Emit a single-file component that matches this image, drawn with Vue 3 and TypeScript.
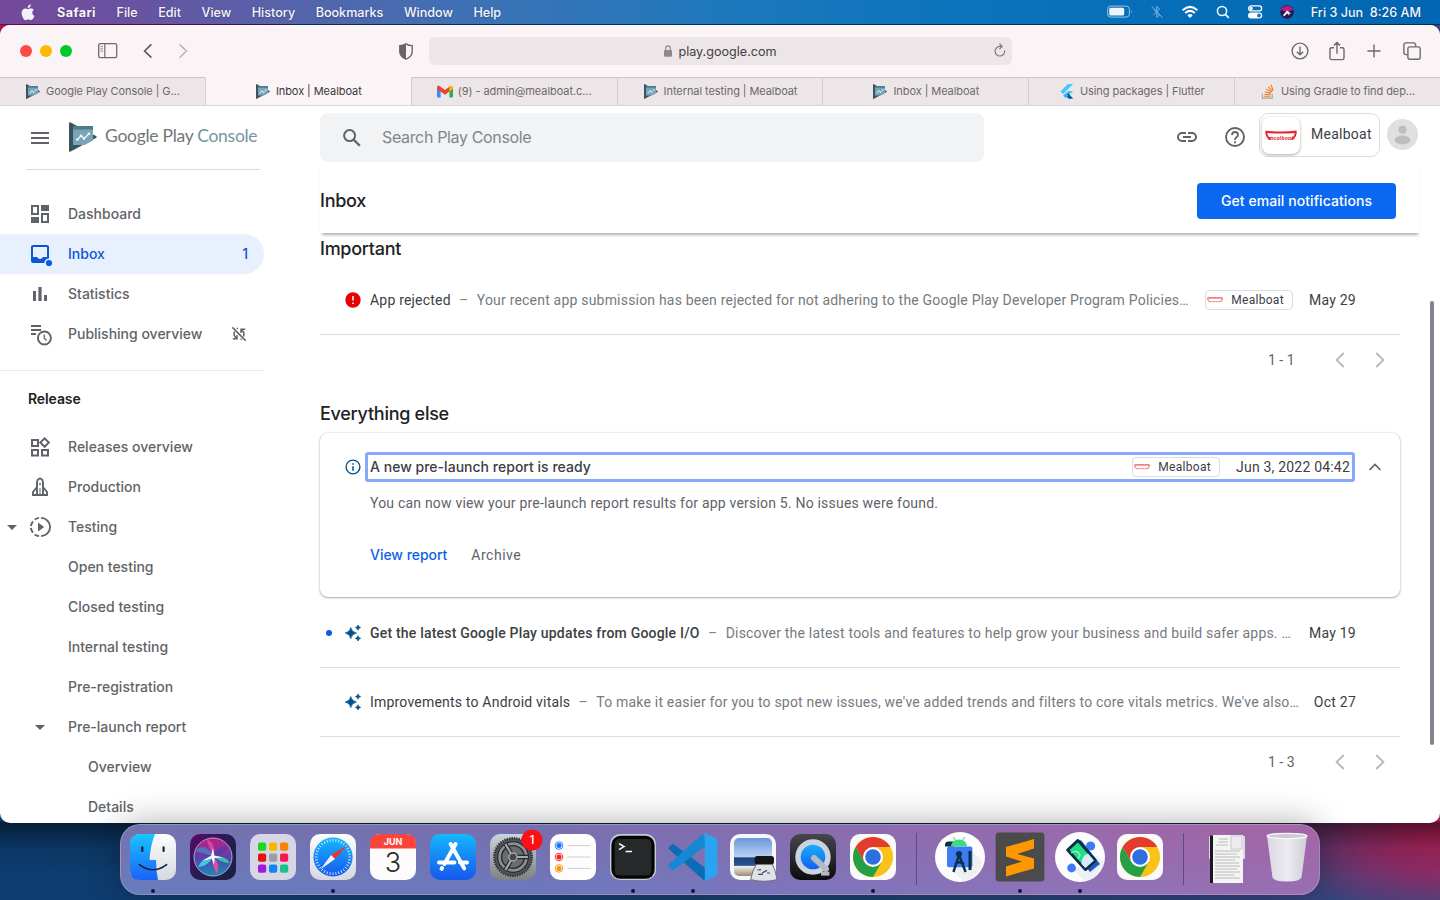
<script setup lang="ts">
interface Tab { title: string; icon: string; active?: boolean }
interface NavItem { label: string; icon?: string; level?: number; arrow?: 'outer' | 'inner'; active?: boolean; count?: number; muted?: boolean }
interface Message { title: string; body: string; date: string; icon: string; unread?: boolean; app?: string }

const menus: string[] = ['File', 'Edit', 'View', 'History', 'Bookmarks', 'Window', 'Help']

const tabs: Tab[] = [
  { title: 'Google Play Console | G...', icon: 'i-play' },
  { title: 'Inbox | Mealboat', icon: 'i-play', active: true },
  { title: '(9) - admin@mealboat.c...', icon: 'i-gmail' },
  { title: 'Internal testing | Mealboat', icon: 'i-play' },
  { title: 'Inbox | Mealboat', icon: 'i-play' },
  { title: 'Using packages | Flutter', icon: 'i-flutter' },
  { title: 'Using Gradle to find dep...', icon: 'i-stack' },
]

const topNav: NavItem[] = [
  { label: 'Dashboard', icon: 'i-dashboard' },
  { label: 'Inbox', icon: 'i-inbox', active: true, count: 1 },
  { label: 'Statistics', icon: 'i-stats' },
  { label: 'Publishing overview', icon: 'i-publishing', muted: true },
]

const releaseNav: NavItem[] = [
  { label: 'Releases overview', icon: 'i-releases' },
  { label: 'Production', icon: 'i-rocket' },
  { label: 'Testing', icon: 'i-testing', arrow: 'outer' },
  { label: 'Open testing' },
  { label: 'Closed testing' },
  { label: 'Internal testing' },
  { label: 'Pre-registration' },
  { label: 'Pre-launch report', arrow: 'inner' },
  { label: 'Overview', level: 2 },
  { label: 'Details', level: 2 },
]

const important: Message[] = [
  {
    title: 'App rejected',
    body: 'Your recent app submission has been rejected for not adhering to the Google Play Developer Program Policies…',
    date: 'May 29',
    icon: 'i-error',
    app: 'Mealboat',
  },
]

const others: Message[] = [
  {
    title: 'Get the latest Google Play updates from Google I/O',
    body: 'Discover the latest tools and features to help grow your business and build safer apps. …',
    date: 'May 19',
    icon: 'i-sparkle',
    unread: true,
  },
  {
    title: 'Improvements to Android vitals',
    body: "To make it easier for you to spot new issues, we've added trends and filters to core vitals metrics. We've also…",
    date: 'Oct 27',
    icon: 'i-sparkle',
  },
]

const ticks: number[] = Array.from({ length: 36 }, (_, i) => i * 10)
const launchpad: string[] = ['#1bd61b', '#f9b500', '#fb8200', '#e8120c', '#9b9fa3', '#fb1550', '#a01bd8', '#1583f5', '#14c48b']
</script>

<template>
  <div class="desktop">
    <svg class="sprite" width="0" height="0" aria-hidden="true">
      <defs>
        <symbol id="i-play" viewBox="0 0 28 30">
          <path d="M0 1.2Q0-.3 1.6.4L27 14Q28.3 15 27 16L1.6 29.6Q0 30.3 0 28.8Z" fill="#3a5361" />
          <path d="M4 4H24V18.4L15.6 23H4Z" fill="#78a4b8" />
          <path d="M4 4H24V7.6H4Z" fill="#507b8b" />
          <path d="M8.3 17.6L12 13.6L15 16.6L20 11.6" fill="none" stroke="#fff" stroke-width="1.3" />
          <circle cx="8.3" cy="17.6" r="1.2" fill="#fff" /><circle cx="12" cy="13.6" r="1.2" fill="#fff" />
          <circle cx="15" cy="16.6" r="1.2" fill="#fff" /><circle cx="20" cy="11.6" r="1.2" fill="#fff" />
        </symbol>
        <symbol id="i-gmail" viewBox="0 0 16 12">
          <path d="M0 2V11Q0 12 1 12H3.6V4.6Z" fill="#4285f4" />
          <path d="M16 2V11Q16 12 15 12H12.4V4.6Z" fill="#34a853" />
          <path d="M0 2Q.4-.6 2.6.4L8 4.6L13.4.4L12.4 6L8 9.2L3.6 6L0 3.2Z" fill="#ea4335" />
          <path d="M12.4 1.2L13.4.4Q15.8-.6 16 2V3.2L12.4 6Z" fill="#fbbc04" />
        </symbol>
        <symbol id="i-flutter" viewBox="0 0 14 16">
          <path d="M8 0H13.6L2.8 10.6L0 8Z" fill="#40c9fa" />
          <path d="M8 7.4H13.6L8.6 12.2L5.6 9.6Z" fill="#40c9fa" />
          <path d="M5.6 12.4L8.3 9.7L13.6 15.8H8.6Z" fill="#0b5aa5" />
          <path d="M2.9 12.4L5.6 9.6L8.4 12.4L5.6 15Z" fill="#35b6f0" />
        </symbol>
        <symbol id="i-stack" viewBox="0 0 14 16">
          <path d="M1 10.5V15H11.5V10.5" fill="none" stroke="#a5a3a4" stroke-width="1.2" />
          <path d="M3 13H9.6M3.1 10.9L9.8 11.5M3.6 8.2L10.2 10M5 5.2L10.9 8.7M7.2 2.8L11.7 7.8M10.2.8L12.6 7.2" fill="none" stroke="#f2801e" stroke-width="1.2" />
        </symbol>
        <symbol id="i-dashboard" viewBox="0 0 24 24">
          <path d="M4 4H10V12H4ZM14 12H20V20H14Z" fill="none" stroke="currentColor" stroke-width="2" />
          <path d="M13 3H21V9H13ZM3 15H11V21H3Z" fill="currentColor" />
        </symbol>
        <symbol id="i-inbox" viewBox="0 0 24 24" overflow="visible">
          <path d="M5 3H19Q21 3 21 5V19Q21 21 19 21H5Q3 21 3 19V5Q3 3 5 3ZM5 5V15H9Q10 17 12 17Q14 17 15 15H19V5Z" fill="currentColor" fill-rule="evenodd" />
          <circle cx="21" cy="21" r="4.6" fill="#e8f0fe" />
          <circle cx="21" cy="21" r="3.1" fill="#0b57f0" />
        </symbol>
        <symbol id="i-stats" viewBox="0 0 24 24">
          <path d="M5 9H8V19H5ZM10.4 5H13.6V19H10.4ZM16 13H19V19H16Z" fill="currentColor" />
        </symbol>
        <symbol id="i-publishing" viewBox="0 0 24 24">
          <path d="M3 4H13M3 8H13M3 12H8" stroke="currentColor" stroke-width="1.9" />
          <circle cx="16.4" cy="16" r="6.5" fill="none" stroke="currentColor" stroke-width="1.9" />
          <path d="M16.2 12.5V16.2L18.6 18.4" fill="none" stroke="currentColor" stroke-width="1.3" />
        </symbol>
        <symbol id="i-releases" viewBox="0 0 24 24">
          <path d="M4 5H10V11H4ZM4 15H10V20.4H4ZM14 15H20V20.4H14ZM16.6 3.4L20.8 7.6L16.6 11.8L12.4 7.6Z" fill="none" stroke="currentColor" stroke-width="2" />
        </symbol>
        <symbol id="i-rocket" viewBox="0 0 24 24">
          <path d="M9 20V8Q9 4 12 3.4Q15 4 15 8V20M9 12L5 17V20H19V17L15 12M5 20H19" fill="none" stroke="currentColor" stroke-width="1.9" />
          <circle cx="12" cy="9" r="1" fill="currentColor" />
          <path d="M12 13V20" stroke="currentColor" stroke-width="1" />
        </symbol>
        <symbol id="i-testing" viewBox="0 0 24 24">
          <path d="M13 2.9A9.1 9.1 0 0 1 13 21.1M11 2.9Q8.6 3.2 6.7 4.6M5 6.3Q3.3 8.3 2.9 11M2.9 13Q3.3 15.7 5 17.7M6.7 19.4Q8.6 20.8 11 21.1" fill="none" stroke="currentColor" stroke-width="1.9" />
          <path d="M10 7.4V16.6L16.2 12Z" fill="currentColor" />
        </symbol>
        <symbol id="i-error" viewBox="0 0 16 16">
          <circle cx="8" cy="8" r="7.7" fill="#e60000" />
          <path d="M8 4V8.6M8 10.4V12" stroke="#fff" stroke-width="1.5" />
        </symbol>
        <symbol id="i-info" viewBox="0 0 16 16">
          <circle cx="8" cy="8" r="6.9" fill="none" stroke="#01508a" stroke-width="1.4" />
          <path d="M8 7.2V11.8M8 4.2V5.8" stroke="#01508a" stroke-width="1.5" />
        </symbol>
        <symbol id="i-sparkle" viewBox="0 0 16 16">
          <path d="M5.8 2.6Q6.7 7.2 11.4 8Q6.7 8.9 5.8 13.6Q4.9 8.9.2 8Q4.9 7.2 5.8 2.6ZM13 0Q13.4 2.2 15.6 2.6Q13.4 3 13 5.2Q12.6 3 10.4 2.6Q12.6 2.2 13 0ZM13 10.8Q13.4 13 15.6 13.4Q13.4 13.8 13 16Q12.6 13.8 10.4 13.4Q12.6 13 13 10.8Z" fill="#01508a" stroke="#01508a" stroke-width=".7" />
        </symbol>
        <symbol id="i-boat" viewBox="0 0 32 11">
          <path d="M1 1.6Q1.8 8 5.6 9.4M31 1.6Q30.2 8 26.4 9.4" fill="none" stroke="#e8252a" stroke-width="1.9" />
          <path d="M.3.5Q16 2.6 31.7.5L30.9 2.9Q16 4 1.2 2.9Z" fill="#e8252a" />
        </symbol>
        <symbol id="i-boat-small" viewBox="0 0 16 6">
          <path d="M.5.9H15.5" stroke="#ea4a4f" stroke-width="1.2" />
          <path d="M.6 1.2Q.8 4.4 3 4.8M15.4 1.2Q15.2 4.4 13 4.8" fill="none" stroke="#ea4a4f" stroke-width=".9" />
          <path d="M3.4 4.7H12.8" stroke="#ee7377" stroke-width="1" stroke-dasharray="2 .5" />
        </symbol>
        <symbol id="i-chrome" viewBox="0 0 60 60">
          <rect x="7" y="7" width="46" height="46" rx="10" fill="#fafafa" />
          <circle cx="30" cy="30" r="20" fill="#fbc116" />
          <path d="M12.7 20A20 20 0 0 1 47.3 20H30L21.3 35Z" fill="#e33b2e" />
          <path d="M12.7 20A20 20 0 0 0 30 50L38.7 35L30 30L21.3 35Z" fill="#26a045" />
          <circle cx="30" cy="30" r="10" fill="#fff" />
          <circle cx="30" cy="30" r="7.8" fill="#2d6fe0" />
        </symbol>
        <linearGradient id="g-finder" x2="0" y2="1"><stop stop-color="#19c5fd" /><stop offset="1" stop-color="#1b62f8" /></linearGradient>
        <linearGradient id="g-white" x2="0" y2="1"><stop stop-color="#fdfdfe" /><stop offset="1" stop-color="#d5d9df" /></linearGradient>
        <linearGradient id="g-blue" x2="0" y2="1"><stop stop-color="#14b8fc" /><stop offset="1" stop-color="#1657ee" /></linearGradient>
        <linearGradient id="g-siri" x2="1" y2="1"><stop stop-color="#5a0a68" /><stop offset=".5" stop-color="#2a1a52" /><stop offset="1" stop-color="#14223f" /></linearGradient>
        <linearGradient id="g-orb" x2="0" y2="1"><stop stop-color="#c81c7d" /><stop offset=".5" stop-color="#5e3fae" /><stop offset="1" stop-color="#158db5" /></linearGradient>
        <linearGradient id="g-gear" x2="0" y2="1"><stop stop-color="#c8d5de" /><stop offset="1" stop-color="#7f8081" /></linearGradient>
        <linearGradient id="g-quick" x2="0" y2="1"><stop stop-color="#45474d" /><stop offset="1" stop-color="#0c0c0e" /></linearGradient>
        <linearGradient id="g-sea" x2="0" y2="1"><stop stop-color="#6a96de" /><stop offset=".5" stop-color="#b9d2f1" /><stop offset=".52" stop-color="#1f3f7c" /><stop offset=".72" stop-color="#2c568f" /><stop offset=".75" stop-color="#eeeeea" /><stop offset="1" stop-color="#9e8a78" /></linearGradient>
        <linearGradient id="g-bin"><stop stop-color="#dcdde2" /><stop offset=".5" stop-color="#f1f1f4" /><stop offset="1" stop-color="#d2d2d8" /></linearGradient>
      </defs>
    </svg>

    <header class="menubar">
      <svg class="apple" viewBox="0 0 14 17" width="14" height="17"><path d="M9.8.2Q9.9 1.8 9 2.9Q8 4.1 6.7 4Q6.6 2.6 7.5 1.5Q8.5.4 9.8.2ZM12.9 5.8Q11.2 6.9 11.3 8.8Q11.4 11 13.4 11.9Q12.9 13.4 12 14.7Q11 16.1 10 16.1Q9.3 16.1 8.6 15.8Q7.2 15.3 5.9 15.8Q5.1 16.2 4.5 16.2Q3.3 16.2 2 14Q.5 11.6.6 9.1Q.7 6.6 2.2 5.3Q3.8 4.1 5.6 4.7Q7 5.3 8.2 4.7Q10.9 3.5 12.9 5.8Z" fill="#f3eef7" /></svg>
      <b class="menu app-name">Safari</b>
      <span v-for="m in menus" :key="m" class="menu">{{ m }}</span>
      <div class="status">
        <svg width="26" height="14" viewBox="0 0 26 14"><rect x=".6" y="1.1" width="21.8" height="11" rx="3.2" fill="none" stroke="#9cc7e3" /><rect x="2.2" y="2.7" width="15" height="7.8" rx="1.6" fill="#eef5fa" /><path d="M24 4.8Q25.4 6.6 24 8.4Z" fill="#9cc7e3" /></svg>
        <svg width="12" height="14" viewBox="0 0 12 14"><path d="M2.4 4L8.6 9.8L5.8 12.6V1.2L8.6 4L2.4 9.8M.8 1.4L11.4 12.6" fill="none" stroke="#7fb4da" /></svg>
        <svg width="18" height="14" viewBox="0 0 18 14"><path d="M1.6 5.2Q9-1.4 16.4 5.2M4.2 8Q9 3.8 13.8 8" fill="none" stroke="#fff" stroke-width="2" /><path d="M6.3 10.2Q9 7.8 11.7 10.2L9 13Z" fill="#fff" /></svg>
        <svg width="14" height="14" viewBox="0 0 14 14"><circle cx="6" cy="6" r="4.6" fill="none" stroke="#fff" stroke-width="1.5" /><path d="M9.4 9.4L12.8 12.8" stroke="#fff" stroke-width="1.7" /></svg>
        <svg width="16" height="14" viewBox="0 0 16 14"><rect x="1.6" y=".9" width="13" height="5" rx="2.5" fill="none" stroke="#fff" stroke-width="1.3" /><circle cx="4.2" cy="3.4" r="1.6" fill="#fff" /><rect x="1" y="7.6" width="14.2" height="6" rx="3" fill="#fff" /><circle cx="12" cy="10.6" r="2" fill="#1d78bb" /></svg>
        <svg width="14" height="14" viewBox="0 0 14 14"><circle cx="7" cy="7" r="6.7" fill="#2a1348" /><path d="M1 5A6.5 6.5 0 0 1 13 5L7 7Z" fill="#c3197c" /><path d="M3 10L7 5.5L11.6 8.8L9 8.4L9.5 11L7.4 8.4L4 11.4Z" fill="#d7f3f8" /></svg>
      </div>
      <span class="clock">Fri 3 Jun&nbsp; 8:26 AM</span>
    </header>

    <section class="window">
      <div class="toolbar">
        <div class="lights"><i class="red" /><i class="amber" /><i class="green" /></div>
        <svg class="t-side" width="20" height="16" viewBox="0 0 20 16"><rect x=".7" y=".7" width="18" height="14" rx="1.6" fill="none" stroke="#6e696b" stroke-width="1.3" /><path d="M6.8 1V15" stroke="#6e696b" stroke-width="1.2" /><path d="M2.4 3.6H5M2.4 5.9H5M2.4 8.2H5" stroke="#8a8587" stroke-width="1" /></svg>
        <svg class="t-back" width="10" height="16" viewBox="0 0 10 16"><path d="M8.4 1.4L1.6 8L8.4 14.6" fill="none" stroke="#5d5759" stroke-width="1.6" /></svg>
        <svg class="t-fwd" width="10" height="16" viewBox="0 0 10 16"><path d="M1.6 1.4L8.4 8L1.6 14.6" fill="none" stroke="#bdb7b9" stroke-width="1.6" /></svg>
        <svg class="t-shield" width="14" height="17" viewBox="0 0 14 17"><path d="M7 .8Q9.6 2.5 13.2 2.6V8.5Q13.2 13.6 7 16.1Q.8 13.6.8 8.5V2.6Q4.4 2.5 7 .8Z" fill="none" stroke="#6a6466" stroke-width="1.4" /><path d="M7 .8V16.1Q.8 13.6.8 8.5V2.6Q4.4 2.5 7 .8Z" fill="#6a6466" /></svg>
        <div class="address">
          <svg width="8" height="12" viewBox="0 0 8 12"><path d="M1.7 6V3.4Q1.8.8 4 .8Q6.2.8 6.3 3.4V6" fill="none" stroke="#8f898b" stroke-width="1.2" /><rect y="5" width="8" height="6.8" rx="1" fill="#8f898b" /></svg>
          <span>play.google.com</span>
          <svg class="reload" width="12" height="14" viewBox="0 0 12 14"><path d="M10.6 7.4A4.8 4.8 0 1 1 6 3.4H8M5.4.6L8.2 3.4L5.4 6.2" fill="none" stroke="#797375" stroke-width="1.1" /></svg>
        </div>
        <div class="tools">
          <svg width="18" height="18" viewBox="0 0 18 18"><circle cx="9" cy="9" r="7.9" /><path d="M9 4.6V12.6M5.9 9.7L9 12.8L12.1 9.7" /></svg>
          <svg width="16" height="20" viewBox="0 0 16 20"><path d="M5 6.7H2.6Q1 6.7 1 8.3V17Q1 18.6 2.6 18.6H13.4Q15 18.6 15 17V8.3Q15 6.7 13.4 6.7H11M8 12.8V1.6M4.9 4.6L8 1.5L11.1 4.6" /></svg>
          <svg width="14" height="14" viewBox="0 0 14 14"><path d="M7 .4V13.6M.4 7H13.6" /></svg>
          <svg width="18" height="18" viewBox="0 0 18 18"><rect x="4.9" y="4.9" width="12.3" height="12.3" rx="2" /><path d="M4.6 12.6H3Q.9 12.6.9 10.6V2.8Q.9.9 2.8.9H10.6Q12.6.9 12.6 2.8V4.6" /></svg>
        </div>
      </div>

      <div class="tabs">
        <div v-for="(t, i) in tabs" :key="i" class="tab" :class="{ active: t.active }">
          <svg class="favicon"><use :href="'#' + t.icon" /></svg>
          <span>{{ t.title }}</span>
        </div>
      </div>

      <div class="page">
        <aside class="sidebar">
          <div class="brand">
            <svg width="18" height="14" viewBox="0 0 18 14"><path d="M0 2H18M0 7H18M0 12H18" stroke="#5f6368" stroke-width="2" /></svg>
            <svg class="logo" width="28" height="30"><use href="#i-play" /></svg>
            <span class="wordmark">Google Play <em>Console</em></span>
          </div>
          <nav class="group top">
            <a v-for="n in topNav" :key="n.label" class="nav" :class="{ active: n.active }">
              <svg class="nav-icon"><use :href="'#' + n.icon" /></svg>
              <span>{{ n.label }}</span>
              <span v-if="n.count" class="count">{{ n.count }}</span>
              <svg v-if="n.muted" class="sync-off" width="16" height="16" viewBox="0 0 16 16"><path d="M1.4 1.4L14.6 14.6M3.2 5.4V9.6L5.4 12.2M1.8 12.8H6V9M12.8 10.6V6.4L10.6 3.8M14.2 3.2H10V7M5.6 2.6L7 2.2M9.6 13.6L10.6 13" fill="none" stroke="#5f6368" stroke-width="1.5" /></svg>
            </a>
          </nav>
          <nav class="group">
            <h3>Release</h3>
            <a v-for="n in releaseNav" :key="n.label" class="nav" :class="{ deep: n.level === 2 }">
              <svg v-if="n.arrow" class="caret" :class="n.arrow" width="10" height="5" viewBox="0 0 10 5"><path d="M0 0H10L5 5Z" fill="#5f6368" /></svg>
              <svg v-if="n.icon" class="nav-icon"><use :href="'#' + n.icon" /></svg>
              <span>{{ n.label }}</span>
            </a>
          </nav>
        </aside>

        <main class="main">
          <div class="topbar">
            <div class="search">
              <svg width="18" height="18" viewBox="0 0 18 18"><circle cx="6.6" cy="6.6" r="5.5" fill="none" stroke="#5f6368" stroke-width="2" /><path d="M10.6 10.6L16.8 16.8" stroke="#5f6368" stroke-width="2.3" /></svg>
              <span>Search Play Console</span>
            </div>
            <svg class="link" width="20" height="10" viewBox="0 0 20 10"><path d="M9 1H5A4 4 0 0 0 5 9H9M11 1H15A4 4 0 0 1 15 9H11M6 5H14" fill="none" stroke="#5f6368" stroke-width="2" /></svg>
            <svg class="help" width="20" height="20" viewBox="0 0 20 20"><circle cx="10" cy="10" r="9" fill="none" stroke="#5f6368" stroke-width="1.9" /><path d="M7 8Q7 5 10 5Q13 5 13 7.8Q13 9.2 11.4 10.3Q10 11.3 10 12.9M10 14.2V16.2" fill="none" stroke="#5f6368" stroke-width="1.8" /></svg>
            <div class="account">
              <div class="app-icon"><svg width="32" height="11"><use href="#i-boat" /></svg><small>mealboat</small></div>
              <span>Mealboat</span>
            </div>
            <svg class="avatar" width="31" height="31" viewBox="0 0 31 31"><circle cx="15.5" cy="15.5" r="15.5" fill="#e0e0e0" /><circle cx="15.5" cy="10.8" r="4" fill="#bdbdbd" /><ellipse cx="15.5" cy="21" rx="8" ry="4.4" fill="#bdbdbd" /></svg>
          </div>

          <div class="page-head">
            <h1>Inbox</h1>
            <button class="primary">Get email notifications</button>
          </div>

          <section class="content">
            <h2 class="first">Important</h2>
            <div v-for="m in important" :key="m.title" class="row">
              <svg class="row-icon"><use :href="'#' + m.icon" /></svg>
              <span class="title">{{ m.title }}</span><span class="dash">–</span>
              <span class="body">{{ m.body }}</span>
              <span class="chip"><svg width="16" height="6"><use href="#i-boat-small" /></svg>{{ m.app }}</span>
              <span class="date">{{ m.date }}</span>
            </div>
            <div class="pager">
              <span>1 - 1</span>
              <svg width="10" height="16" viewBox="0 0 10 16"><path d="M8.8 1L1.6 8L8.8 15" /></svg>
              <svg width="10" height="16" viewBox="0 0 10 16"><path d="M1.2 1L8.4 8L1.2 15" /></svg>
            </div>

            <h2>Everything else</h2>
            <article class="card">
              <div class="card-head">
                <svg class="row-icon"><use href="#i-info" /></svg>
                <div class="focused">
                  <strong>A new pre-launch report is ready</strong>
                  <span class="chip"><svg width="16" height="6"><use href="#i-boat-small" /></svg>Mealboat</span>
                  <span class="date">Jun 3, 2022 04:42</span>
                </div>
                <svg class="collapse" width="12" height="8" viewBox="0 0 12 8"><path d="M.6 7L6 1.4L11.4 7" fill="none" stroke="#5f6368" stroke-width="1.6" /></svg>
              </div>
              <p>You can now view your pre-launch report results for app version 5. No issues were found.</p>
              <div class="actions"><a class="view">View report</a><a class="archive">Archive</a></div>
            </article>
            <div v-for="m in others" :key="m.title" class="row other" :class="{ unread: m.unread }">
              <i v-if="m.unread" class="dot" />
              <svg class="row-icon"><use :href="'#' + m.icon" /></svg>
              <span class="title">{{ m.title }}</span><span class="dash">–</span>
              <span class="body">{{ m.body }}</span>
              <span class="date">{{ m.date }}</span>
            </div>
            <div class="pager">
              <span>1 - 3</span>
              <svg width="10" height="16" viewBox="0 0 10 16"><path d="M8.8 1L1.6 8L8.8 15" /></svg>
              <svg width="10" height="16" viewBox="0 0 10 16"><path d="M1.2 1L8.4 8L1.2 15" /></svg>
            </div>
          </section>
        </main>
        <div class="scrollbar" />
      </div>
    </section>

    <footer class="dock">
      <!-- Finder -->
      <svg viewBox="0 0 60 70">
        <rect x="7" y="7" width="46" height="46" rx="10" fill="url(#g-white)" />
        <path d="M17 7H32Q27 20 26.6 33H33Q33 44 35 53H17Q7 53 7 43V17Q7 7 17 7Z" fill="url(#g-finder)" />
        <path d="M19.3 20.4V24M40.6 20.4V24" stroke="#14213a" stroke-width="2.2" stroke-linecap="round" />
        <path d="M16.4 37.6Q30 48 43.6 37.6" fill="none" stroke="#14213a" stroke-width="1.6" stroke-linecap="round" />
        <circle class="run" cx="30" cy="64" r="2" />
      </svg>
      <!-- Siri -->
      <svg viewBox="0 0 60 70">
        <rect x="7" y="7" width="46" height="46" rx="10" fill="url(#g-siri)" />
        <circle cx="30" cy="30" r="19" fill="url(#g-orb)" stroke="#a9a6cf" stroke-width="1" />
        <path d="M12 24Q22 14 30 29Q20 26 12 24Z" fill="#24b6d8" opacity=".5" />
        <path d="M24 13Q32 14 31 29Q26 22 24 13Z" fill="#ef5aa5" opacity=".6" />
        <path d="M31 29Q38 16 45 20Q42 27 31 29Z" fill="#5c37a9" opacity=".8" />
        <path d="M30 29Q42 28 47 36Q38 36 30 29Z" fill="#2fe0b3" opacity=".8" />
        <path d="M30 29Q38 38 34 47Q29 40 30 29Z" fill="#f14d9c" opacity=".9" />
        <path d="M30 29Q18 32 15 40Q25 40 30 29Z" fill="#43e1f2" opacity=".8" />
        <path d="M30 21L31.4 28.4L40 30.6L31.6 31L31 38L28.6 31.4L19 34L28 28.8Z" fill="#f4fbff" />
      </svg>
      <!-- Launchpad -->
      <svg viewBox="0 0 60 70">
        <rect x="7" y="7" width="46" height="46" rx="10" fill="#d6d6e6" />
        <rect v-for="(c, i) in launchpad" :key="i" :x="15 + (i % 3) * 11" :y="15.6 + Math.floor(i / 3) * 11" width="8.2" height="8.2" rx="1.8" :fill="c" />
      </svg>
      <!-- Safari -->
      <svg viewBox="0 0 60 70">
        <rect x="7" y="7" width="46" height="46" rx="10" fill="url(#g-white)" />
        <circle cx="30" cy="30" r="19.6" fill="url(#g-blue)" />
        <path v-for="t in ticks" :key="t" d="M30 11.8V14.6" stroke="#d5ecfd" stroke-width=".9" :transform="`rotate(${t} 30 30)`" />
        <path d="M43.6 19L32 32L28 28Z" fill="#f3302c" /><path d="M17.4 42.6L28 28L32 32Z" fill="#f4f4f6" />
        <circle class="run" cx="30" cy="64" r="2" />
      </svg>
      <!-- Calendar -->
      <svg viewBox="0 0 60 70">
        <rect x="7" y="7" width="46" height="46" rx="10" fill="#fcfcfc" />
        <path d="M7 21.4V17Q7 7 17 7H43Q53 7 53 17V21.4Z" fill="#fb443b" />
        <text class="cal-month" x="30" y="18.2">JUN</text><text class="cal-day" x="30" y="45">3</text>
      </svg>
      <!-- App Store -->
      <svg viewBox="0 0 60 70">
        <rect x="7" y="7" width="46" height="46" rx="10" fill="url(#g-blue)" />
        <path d="M32.6 17L21.4 37M19 41L18.6 41.8M27.6 17L41.2 41.4M16 35.4H31.4M37 35.4H44" fill="none" stroke="#fff" stroke-width="4" stroke-linecap="round" />
      </svg>
      <!-- System Preferences -->
      <svg viewBox="0 0 60 70">
        <rect x="7" y="7" width="46" height="46" rx="10" fill="url(#g-gear)" />
        <circle cx="30" cy="30" r="18.8" fill="#55565a" stroke="#303135" stroke-width="2.4" stroke-dasharray="1.4 1" />
        <circle cx="30" cy="30" r="15.4" fill="#8e8f92" stroke="#27282a" stroke-width="1.2" />
        <circle cx="30" cy="30" r="11.4" fill="#6b6c70" stroke="#2a2b2e" stroke-width="1.4" />
        <path d="M30 30H45M30 30L22.4 17M30 30L22.4 43" stroke="#292a2d" stroke-width="4.4" /><path d="M30 30H45M30 30L22.4 17M30 30L22.4 43" stroke="#a5a6a9" stroke-width="2.2" />
        <circle cx="30" cy="30" r="4" fill="#46474a" stroke="#a7a8aa" stroke-width="1.4" />
        <circle cx="49" cy="13" r="10.6" fill="#fb1014" /><text class="badge" x="49" y="17.4">1</text>
      </svg>
      <!-- Reminders -->
      <svg viewBox="0 0 60 70">
        <rect x="7" y="7" width="46" height="46" rx="10" fill="#fdfdfe" />
        <path d="M24.4 18.6H47.6M24.4 30H47.6M24.4 41.4H47.6" stroke="#cfcfd2" stroke-width="1" />
        <g fill="none" stroke-width=".9"><circle cx="16" cy="18.6" r="3.8" stroke="#1673ff" /><circle cx="16" cy="30" r="3.8" stroke="#fb2222" /><circle cx="16" cy="41.4" r="3.8" stroke="#f9930e" /></g>
        <circle cx="16" cy="18.6" r="2.5" fill="#1673ff" /><circle cx="16" cy="30" r="2.5" fill="#fb2222" /><circle cx="16" cy="41.4" r="2.5" fill="#f9930e" />
      </svg>
      <!-- Terminal -->
      <svg viewBox="0 0 60 70">
        <rect x="7" y="7" width="46" height="46" rx="10" fill="#c4cfd2" />
        <rect x="8.4" y="8.8" width="43.2" height="43" rx="9" fill="#050506" />
        <rect x="11.6" y="12" width="36.8" height="36.6" rx="5" fill="#27282a" />
        <path d="M16 16.6L21 19.6L16 22.6M22.6 24.6H29" fill="none" stroke="#fff" stroke-width="1.5" />
        <circle class="run" cx="30" cy="64" r="2" />
      </svg>
      <!-- VS Code -->
      <svg viewBox="0 0 60 70">
        <path d="M5.6 22Q5.2 20.8 6 20L9 17.4Q10 16.8 11 17.4L43 41.4V54L40 52.6Z" fill="#0b6cb6" />
        <path d="M5.6 39.4Q5.2 38.2 6 37.2L40 6.6L43 18.6L11 43Q10 43.6 9 43Z" fill="#1687d2" />
        <path d="M41.2 5.6L52.6 11Q54.4 12 54.4 14V46Q54.4 48 52.6 49L41.6 54.4Q41.6 52.8 41.8 50V10Z" fill="#29a4f0" />
        <circle class="run" cx="30" cy="64" r="2" />
      </svg>
      <!-- Preview -->
      <svg viewBox="0 0 60 70">
        <rect x="7" y="7" width="46" height="46" rx="10" fill="#f6f6f8" />
        <rect x="11" y="11" width="38" height="38" rx="5" fill="url(#g-sea)" />
        <path d="M34 36H49Q53 44 54 52.6Q41 56 27.6 52.6Q29 44 34 36Z" fill="#dfe2e6" stroke="#6d7278" stroke-width="1" />
        <rect x="31.6" y="29" width="19.4" height="8.4" rx="2.6" fill="#141516" />
        <path d="M34.6 43L38 42.6M39 46L44 43.4M44 46H47M35 47.4H40" stroke="#454b52" stroke-width="1.2" />
      </svg>
      <!-- QuickTime -->
      <svg viewBox="0 0 60 70">
        <rect x="7" y="7" width="46" height="46" rx="10" fill="url(#g-quick)" />
        <circle cx="30" cy="30" r="15" fill="url(#g-blue)" stroke="#cbd3df" stroke-width="5.4" />
        <path d="M31 31L43 42" stroke="#b4bac3" stroke-width="6" stroke-linecap="round" /><path d="M38 44.6H46.4V48.6H38Z" fill="#b4bac3" />
      </svg>
      <!-- Chrome -->
      <svg viewBox="0 0 60 70"><use href="#i-chrome" width="60" height="60" /><circle class="run" cx="30" cy="64" r="2" /></svg>
      <span class="sep" />
      <!-- Android Studio -->
      <svg viewBox="0 0 60 70">
        <circle cx="30" cy="30" r="25" fill="#fdfdfe" /><path d="M38 20L52.4 34.6Q48 51 34 54.6L24 45Z" fill="#eff0f2" />
        <rect x="17" y="19.6" width="25.4" height="20.6" rx="2" fill="#3c7df5" />
        <path d="M18 14.4H24V19.6H15V17Q15.4 14.6 18 14.4Z" fill="#0b2f49" />
        <path d="M21 19.6Q21.4 12.6 29 12.4Q36.6 12.6 37 19.6Z" fill="#3ddc84" /><path d="M23.4 10L25.4 13.4M34.6 10L32.6 13.4" stroke="#3ddc84" stroke-width="1" />
        <path d="M29 28L23.4 45M29 28L35.6 45M25 37Q30 33.6 34 37" fill="none" stroke="#0b2f49" stroke-width="2.4" /><circle cx="29" cy="27" r="3" fill="#0b2f49" /><path d="M40 24V43" stroke="#0b2f49" stroke-width="3" />
      </svg>
      <!-- Sublime Text -->
      <svg viewBox="0 0 60 70">
        <rect x="5.6" y="5.6" width="48.8" height="48.8" rx="3" fill="#4b4b4b" />
        <path d="M44 12V21.4L27 27L44 31.4V41.6L16 49.4V39.6L32 34.6L16 29.6V20Z" fill="#ff9800" />
        <circle class="run" cx="30" cy="64" r="2" />
      </svg>
      <!-- Emulator -->
      <svg viewBox="0 0 60 70">
        <circle cx="30" cy="30" r="25" fill="#fdfdfe" /><path d="M46 28L54 34Q50 50 35 54.4L24 43Z" fill="#eff0f2" />
        <circle cx="40.6" cy="19" r="4.6" fill="#3c7df5" /><circle cx="21.6" cy="41" r="4.4" fill="#3c7df5" />
        <path d="M30 12L49 36L39 44L20 21Z" fill="#2456c4" transform="translate(1 1)" />
        <path d="M17.6 23L28 13.4L45.4 33.4L35.4 42.6Z" fill="#1fdf86" stroke="#082f48" stroke-width="2.8" stroke-linejoin="round" />
        <path d="M31.4 37Q31 29 38 26.4L44 33.4L35.4 41Z" fill="#d7eafc" /><path d="M21 26Q27 22 30 28L28 32" fill="none" stroke="#9df0c5" stroke-width="1.4" />
        <circle class="run" cx="30" cy="64" r="2" />
      </svg>
      <!-- Chrome profile -->
      <svg viewBox="0 0 60 70"><use href="#i-chrome" width="60" height="60" /></svg>
      <span class="sep" />
      <!-- Documents stack -->
      <svg viewBox="0 0 60 70">
        <rect x="12" y="9" width="36" height="23" rx="1" fill="#dcdce0" /><path d="M13 8.6H16V56H13Z" fill="#19191c" />
        <rect x="16" y="8" width="30" height="48" fill="#f4f4f5" />
        <path d="M22 12H31M21 15H31M19 18H31M18 24H43M18 27H40M18 30H43M18 33H38M18 36H42M18 39H43M18 42H40M18 45H43M18 48H37M18 51H43" stroke="#b4b4b8" stroke-width=".9" />
        <path d="M34 9H45V22H34Z" fill="#ececf0" stroke="#c1c1c6" stroke-width=".8" />
      </svg>
      <!-- Bin -->
      <svg viewBox="0 0 60 70">
        <path d="M10 8.4L15.4 50Q16.4 54.6 30 54.6Q43.6 54.6 44.6 50L50 8.4Z" fill="url(#g-bin)" opacity=".96" />
        <ellipse cx="30" cy="9" rx="20" ry="2.6" fill="#cccad3" stroke="#f7f7f9" stroke-width="1.2" />
      </svg>
    </footer>
  </div>
</template>

<style>
html, body { margin: 0; overflow: hidden; }
</style>

<style scoped>
.desktop { position: relative; width: 1440px; height: 900px; overflow: hidden; font-family: Roboto, "Liberation Sans", sans-serif; color: #3c4043;
  background:
    linear-gradient(180deg, transparent 820px, rgba(0, 0, 0, .5) 823px, rgba(0, 0, 0, .12) 848px, transparent 875px),
    radial-gradient(circle 40px at 0 30px, #b8104f 0, transparent 100%),
    radial-gradient(ellipse 190px 90px at 1450px 828px, #c01e55 0, #8a2c66 50%, transparent 100%),
    linear-gradient(90deg, #0c3d71 0, #123c6d 20%, #1b4070 60%, #30437a 85%, #3c4680 100%); }
.sprite { position: absolute; }
.menubar { display: flex; align-items: center; box-sizing: border-box; height: 25px; padding: 0 19px 0 21px; border-bottom: 1px solid #0d2b45; border-image: linear-gradient(90deg, #6b0a3c 0, #3c1240 19%, #0d2b45 21%) 1; font: 500 12.6px Inter, "Liberation Sans", sans-serif; color: #f7f4fa;
  background: linear-gradient(90deg, #75489a 0, #6655a2 150px, #5763aa 280px, #3a73b7 500px, #1c78bc 740px, #0b74bc 960px, #0066b3 1440px); text-shadow: 0 1px 2px rgba(0, 0, 0, .25); }
.apple { margin-right: 22px; }
.menu { margin-right: 20.5px; }
.app-name { font-weight: 700; letter-spacing: .45px; }
.status { display: flex; align-items: center; gap: 17px; margin-left: auto; margin-right: 17px; }
.status svg:nth-child(-n+2) { margin-right: 1px; }
.clock { white-space: nowrap; }

.window { display: flex; flex-direction: column; height: 798px; border-radius: 10px; overflow: hidden; background: #fff; }
.toolbar { display: flex; align-items: center; flex: none; height: 52px; background: #faf4f6; }
.lights { display: flex; gap: 8px; margin-left: 20px; }
.lights i { width: 12px; height: 12px; border-radius: 50%; }
.red { background: #fd4a44; } .amber { background: #fdb900; } .green { background: #00c92c; }
.t-side { margin-left: 26px; } .t-back { margin-left: 25px; } .t-fwd { margin-left: 25px; } .t-shield { margin-left: 211px; }
.address { position: relative; display: flex; align-items: center; justify-content: center; gap: 6px; width: 583px; height: 28px; margin-left: 16px; border-radius: 6px; background: #ece6e8; font: 400 12.6px Inter, "Liberation Sans", sans-serif; color: #454042; }
.reload { position: absolute; right: 6px; top: 6px; }
.tools { display: flex; align-items: center; gap: 22px; margin-left: auto; margin-right: 19px; }
.tools svg { fill: none; stroke: #6e696b; stroke-width: 1.4; }
.tools svg:first-child { margin-right: -2px; }

.tabs { display: flex; flex: none; height: 29px; box-sizing: border-box; border-bottom: 1px solid #d9d6d8; background: #ece6e8; }
.tab { display: flex; align-items: center; justify-content: center; gap: 5px; flex: 1; box-sizing: border-box; padding-bottom: 1px; border-top: 1px solid #cbc5c8; border-left: 1px solid #d3cdcf; font: 400 11px Inter, "Liberation Sans", sans-serif; letter-spacing: -.07px; color: #6d686a; white-space: nowrap; }
.tab:first-child { border-left: 0; }
.tab.active { background: #faf4f6; border-top-color: #faf4f6; color: #3b3739; }
.favicon { width: 16px; height: 15px; }

.page { position: relative; display: flex; height: 717px; }
.sidebar { flex: none; width: 264px; overflow: hidden; }
.brand { display: flex; align-items: center; height: 63px; margin: 0 4px 0 26px; padding-left: 5px; border-bottom: 1px solid #dadce0; }
.brand > * { flex: none; }
.logo { margin: 0 8px 0 20px; position: relative; top: -1px; }
.wordmark { margin-top: -5px; font: 400 17.5px Lato, sans-serif; letter-spacing: -.28px; color: #757575; white-space: nowrap; }
.wordmark em { font-style: normal; color: #7594a2; }
.group { border-bottom: 1px solid #e8eaed; }
.group.top { padding: 24px 0 16px; }
.group h3 { margin: 20px 0 20px 28px; font: 600 14px/16px Inter, sans-serif; letter-spacing: -.1px; color: #202124; }
.nav { position: relative; display: flex; align-items: center; box-sizing: border-box; height: 40px; padding-left: 68px; font: 500 14px Inter, "Liberation Sans", sans-serif; color: #5f6368; white-space: nowrap; }
.nav span { padding-bottom: 2px; }
.nav.active { border-radius: 0 20px 20px 0; background: #e8f0fe; color: #0b57d8; }
.nav.deep { padding-left: 88px; }
.nav-icon { width: 24px; height: 24px; margin: 0 16px 0 -40px; overflow: visible; }
.count { margin-left: auto; margin-right: 16px; }
.sync-off { margin-left: auto; margin-right: 17px; }
.caret { position: absolute; left: 7px; }
.caret.inner { left: 35px; }

.main { width: 1120px; padding-left: 56px; }
.topbar { display: flex; align-items: flex-start; box-sizing: border-box; height: 56px; padding-top: 7px; }
.search { display: flex; align-items: center; gap: 21px; box-sizing: border-box; width: 664px; height: 49px; padding-left: 23px; border-radius: 8px; background: #f1f3f4; font: 400 16px Inter, sans-serif; letter-spacing: -.35px; color: #80868b; }
.search span { padding-bottom: 2px; }
.link { margin: 19px 0 0 193px; }
.help { margin: 14px 0 0 28px; margin-left: 38px; }
.link + .help { margin-left: 28px; }
.account { display: flex; align-items: center; box-sizing: border-box; width: 121px; height: 44px; margin-left: 14px; padding-left: 2px; border: 1px solid #dadce0; border-radius: 9px; font-size: 14px; letter-spacing: .25px; }
.account > span { margin: -2px 0 0 11px; }
.app-icon { display: flex; flex-direction: column; align-items: center; justify-content: center; width: 38px; height: 37px; border-radius: 8px; background: #fff; box-shadow: 0 1px 3px rgba(60, 64, 67, .45); }
.app-icon small { margin-top: -6px; font: italic 700 5px/6px Inter, sans-serif; color: #e8252a; }
.avatar { margin: 6px 0 0 7px; }
.page-head { position: relative; display: flex; align-items: center; justify-content: space-between; box-sizing: border-box; width: 1100px; height: 71px; padding: 6px 24px 0 0; background: #fff; box-shadow: 0 4px 3px -2px rgba(60, 64, 67, .42); }
h1, h2 { margin: 0; font: 500 18px/24px Inter, "Liberation Sans", sans-serif; letter-spacing: -.27px; color: #202124; }
.primary { width: 199px; height: 36px; padding: 0 0 1px; border: 0; border-radius: 4px; background: #0b68f3; color: #fff; font: 500 14px Inter, sans-serif; letter-spacing: .07px; }
.content { width: 1080px; }
.content h2 { margin-top: 18px; }
.content h2.first { margin-top: 4px; }
.row { position: relative; display: flex; align-items: center; box-sizing: border-box; height: 74px; padding: 5px 44px 0 25px; border-bottom: 1px solid #dadce0; font-size: 14px; letter-spacing: .2px; white-space: nowrap; }
.row.other { height: 69px; padding-top: 0; }
.row.other.unread { height: 71px; padding-top: 2px; }
.dot { position: absolute; left: 6px; width: 6px; height: 6px; border-radius: 50%; background: #0b57f0; }
.row-icon { flex: none; width: 16px; height: 16px; margin-right: 9px; }
.unread .title { font-weight: 500; }
.dash { margin: 0 8.3px; color: #80868b; }
.body { color: #757a80; }
.chip { display: flex; align-items: center; gap: 8px; box-sizing: border-box; height: 20px; margin-left: auto; padding: 0 8px 1px 1px; border: 1px solid #dadce0; border-radius: 4px; font-size: 12px; letter-spacing: .3px; color: #3c4043; }
.row .date { margin-left: auto; letter-spacing: .25px; }
.row .chip + .date { margin-left: 16px; }
.pager { display: flex; align-items: center; height: 49px; padding-left: 948px; font-size: 14px; color: #5f6368; }
.pager span { flex: none; width: 67px; }
.pager svg { flex: none; margin-right: 30px; fill: none; stroke: #b5b8bb; stroke-width: 1.8; }
.card { box-sizing: border-box; height: 164px; margin-top: 7px; padding: 19px 0 0 25px; border-radius: 8px; box-shadow: 0 1px 2px rgba(60, 64, 67, .38), 0 0 2px rgba(60, 64, 67, .28); }
.card-head { display: flex; align-items: center; height: 30px; }
.card-head .row-icon { margin-right: 4px; }
.focused { display: flex; align-items: center; box-sizing: border-box; width: 990px; height: 30px; padding: 0 2px; border: 3px solid #86a9fa; border-radius: 3px; font-size: 14px; letter-spacing: .2px; }
.focused strong { padding-bottom: 2px; font: 500 14px Inter, sans-serif; letter-spacing: .02px; }
.focused .date { margin-left: 16px; }
.collapse { margin-left: 14px; }
.card p { margin: 11px 0 0 25px; font-size: 14px; line-height: 20px; letter-spacing: .2px; color: #5f6368; }
.actions { display: flex; align-items: center; gap: 24px; margin: 32px 0 0 25px; font-size: 14px; line-height: 20px; letter-spacing: .5px; color: #5f6368; }
.view { font: 500 14px/20px Inter, sans-serif; letter-spacing: -.03px; color: #0b62ea; }
.scrollbar { position: absolute; left: 1430px; top: 195px; width: 4px; height: 444px; border-radius: 2px; background: #80868b; }

.dock { position: absolute; left: 120px; top: 824px; display: flex; box-sizing: border-box; width: 1200px; height: 71px; padding: 2px 2px 0; border: 1px solid rgba(255, 255, 255, .22); border-radius: 20px;
  background: linear-gradient(180deg, rgba(150, 80, 140, .2), rgba(90, 130, 210, .2)), linear-gradient(90deg, #6b7ab6 0, #7176b7 35%, #8a72b5 62%, #9a6fb2 80%, #a869a9 100%); box-shadow: 0 -2px 34px rgba(0, 0, 0, .3); }
.dock svg { flex: none; width: 60px; height: 70px; overflow: visible; }
.sep { flex: none; width: 1px; height: 52px; margin: 6px 13px 0; background: #5b4a8a; }
.run { fill: #17103f; }
.cal-month { font: 700 9px Inter, sans-serif; fill: #fff; text-anchor: middle; }
.cal-day { font: 300 27px Inter, sans-serif; fill: #2b2b2c; text-anchor: middle; }
.badge { font: 500 12px Inter, sans-serif; fill: #fff; text-anchor: middle; }
</style>
